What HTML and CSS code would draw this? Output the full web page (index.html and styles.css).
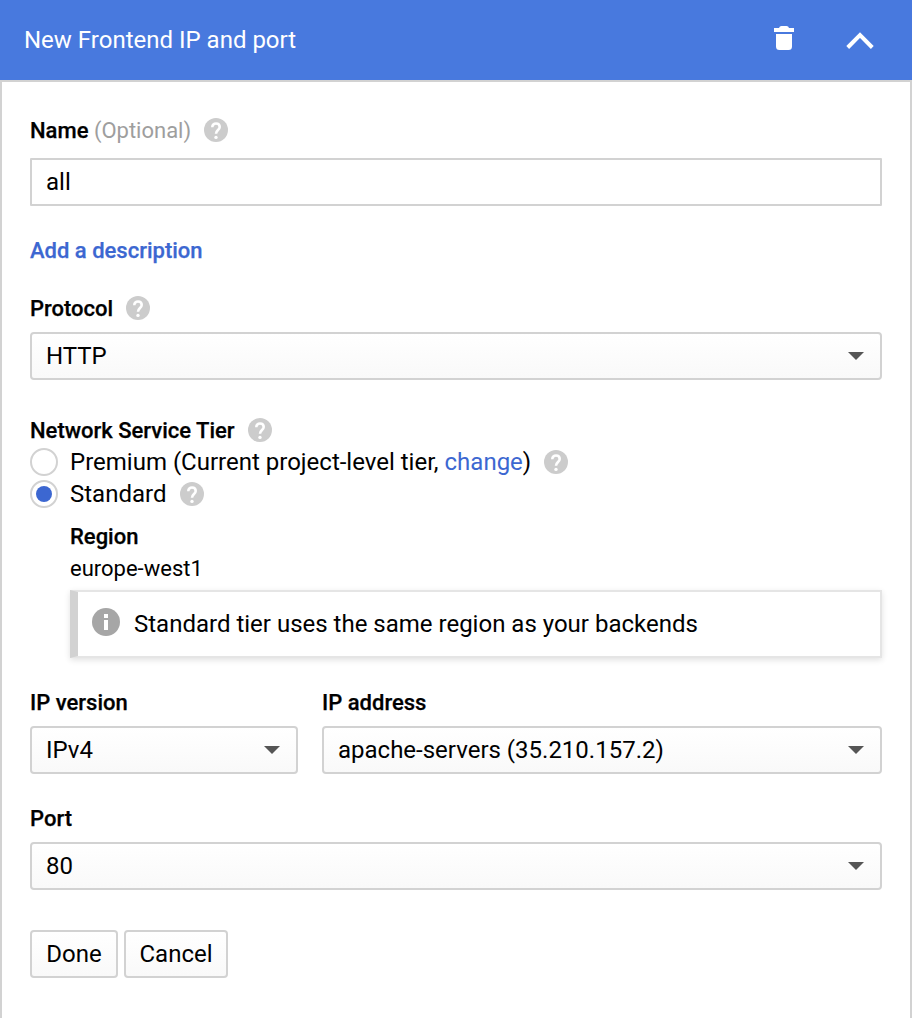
FILE: index.html
```html
<!DOCTYPE html>
<html lang="en">
<head>
<meta charset="utf-8">
<title>New Frontend IP and port</title>
<link rel="stylesheet" href="styles.css">
</head>
<body>
<svg class="defs" aria-hidden="true">
  <symbol id="help" viewBox="0 0 24 24"><circle cx="12" cy="12" r="12"/><path class="mark" d="M8.300 9.200C8.300 6.900 9.900 5.500 12 5.500s3.700 1.400 3.700 3.500c0 2.900-3.700 3.200-3.700 6.700"/><circle class="dot" cx="12" cy="19.400" r="1.700"/></symbol>
</svg>
<header class="header">
  <h1 class="title">New Frontend IP and port</h1>
  <svg class="trash" viewBox="0 0 20 24"><path d="M5 2Q5.500 0 7.500 0h5Q14.500 0 15 2h5v4H0V2zM2 8h16v12.500q0 3.500-3.500 3.500h-9Q2 24 2 20.500z"/></svg>
  <svg class="chevron" viewBox="0 0 28 18"><path d="M1.700 15.500L14 3.200l12.300 12.300"/></svg>
</header>
<main class="panel">
  <label class="label">Name <span class="optional">(Optional)</span><svg class="help"><use href="#help"/></svg></label>
  <div class="field input">all</div>
  <a class="add">Add a description</a>
  <label class="label">Protocol<svg class="help"><use href="#help"/></svg></label>
  <div class="field select">HTTP<i class="caret"></i></div>
  <div class="label tier">Network Service Tier<svg class="help"><use href="#help"/></svg></div>
  <div class="option"><span class="radio"></span><span>Premium (Current project-level tier, <a class="link">change</a>)</span><svg class="help"><use href="#help"/></svg></div>
  <div class="option"><span class="radio checked"></span><span>Standard</span><svg class="help"><use href="#help"/></svg></div>
  <section class="region">
    <div class="region-label">Region</div>
    <div class="region-value">europe-west1</div>
    <div class="notice">
      <svg class="info" viewBox="0 0 28 28"><circle cx="14" cy="14" r="14"/><path d="M12 6h4v4h-4zM12 12h4v10h-4z"/></svg>
      <span>Standard tier uses the same region as your backends</span>
    </div>
  </section>
  <div class="columns">
    <div><label class="label">IP version</label><div class="field select">IPv4<i class="caret"></i></div></div>
    <div><label class="label">IP address</label><div class="field select">apache-servers (35.210.157.2)<i class="caret"></i></div></div>
  </div>
  <label class="label port">Port</label>
  <div class="field select">80<i class="caret"></i></div>
  <div class="actions"><button class="button done">Done</button><button class="button cancel">Cancel</button></div>
</main>
</body>
</html>
```
FILE: styles.css
```css
* { box-sizing: border-box; }
body { margin: 0; min-height: 1018px; display: flex; flex-direction: column; background: #fff; color: #000; font: 24px/32px Roboto, sans-serif; }
.defs { position: absolute; width: 0; height: 0; }
.header { display: flex; height: 80px; padding: 0 38px 0 24px; background: #4879de; color: #fff; }
.title { flex: 1; margin: 24px 0 0; font-size: 24px; font-weight: 400; line-height: 32px; }
.trash { width: 20px; height: 24px; margin: 26px 52px 0 0; fill: #fff; }
.chevron { width: 28px; height: 18px; margin-top: 32px; fill: none; stroke: #fff; stroke-width: 4; }
.panel { flex: 1; padding: 32px 28px 0; border: 2px solid #d2d2d2; border-bottom: 0; }
.label { display: flex; align-items: center; height: 32px; margin-bottom: 8px; padding-top: 2px; font-size: 22px; font-weight: 500; white-space: pre; -webkit-text-stroke: .25px; }
.optional { font-weight: 400; color: #9e9e9e; -webkit-text-stroke: 0; }
.help { width: 24px; height: 24px; margin-left: 13px; fill: #ccc; }
.label .help { margin-top: -2px; }
.mark { fill: none; stroke: #fff; stroke-width: 2.6; }
.dot { fill: #fff; }
.field { display: flex; align-items: center; justify-content: space-between; height: 48px; padding: 0 16px 0 14px; border: 2px solid #d2d2d2; }
.input { margin-top: 12px; border-radius: 1px; }
.select { border-radius: 4px; background: linear-gradient(#fff, #f9f9f9); }
.caret { border: 8px solid transparent; border-top-color: #555; border-bottom: 0; }
.add { display: block; margin: 29px 0 25px; color: #3c67d1; font-size: 22px; font-weight: 500; -webkit-text-stroke: .25px; }
.tier { margin: 34px 0 0; }
.option { display: flex; align-items: center; height: 32px; }
.radio { display: grid; place-items: center; width: 28px; height: 28px; margin-right: 12px; border: 2px solid #d2d2d2; border-radius: 50%; }
.checked::after { content: ""; width: 16px; height: 16px; border-radius: 50%; background: #3c67d1; }
.link { color: #3c67d1; }
.checked ~ .help { margin-left: 14px; }
.region { margin: 11px 0 28px 40px; font-size: 22px; }
.region-label { font-weight: 500; -webkit-text-stroke: .25px; }
.notice { display: flex; align-items: center; height: 68px; margin-top: 5px; padding-left: 14px; border: 2px solid #e5e5e5; border-left: 8px solid #d2d2d2; box-shadow: 0 2px 6px rgba(0,0,0,.12); font-size: 24px; }
.info { width: 28px; height: 28px; margin: -4px 14px 0 0; fill: #a6a6a6; }
.info path { fill: #fff; }
.columns { display: grid; grid-template-columns: 268px 1fr; gap: 24px; }
.port { margin-top: 28px; }
.actions { display: flex; gap: 6px; margin-top: 40px; }
.button { height: 48px; padding: 0; border: 2px solid #d2d2d2; border-radius: 4px; background: linear-gradient(#fff, #f9f9f9); color: #000; font: inherit; }
.done { width: 88px; }
.cancel { width: 104px; }
```
